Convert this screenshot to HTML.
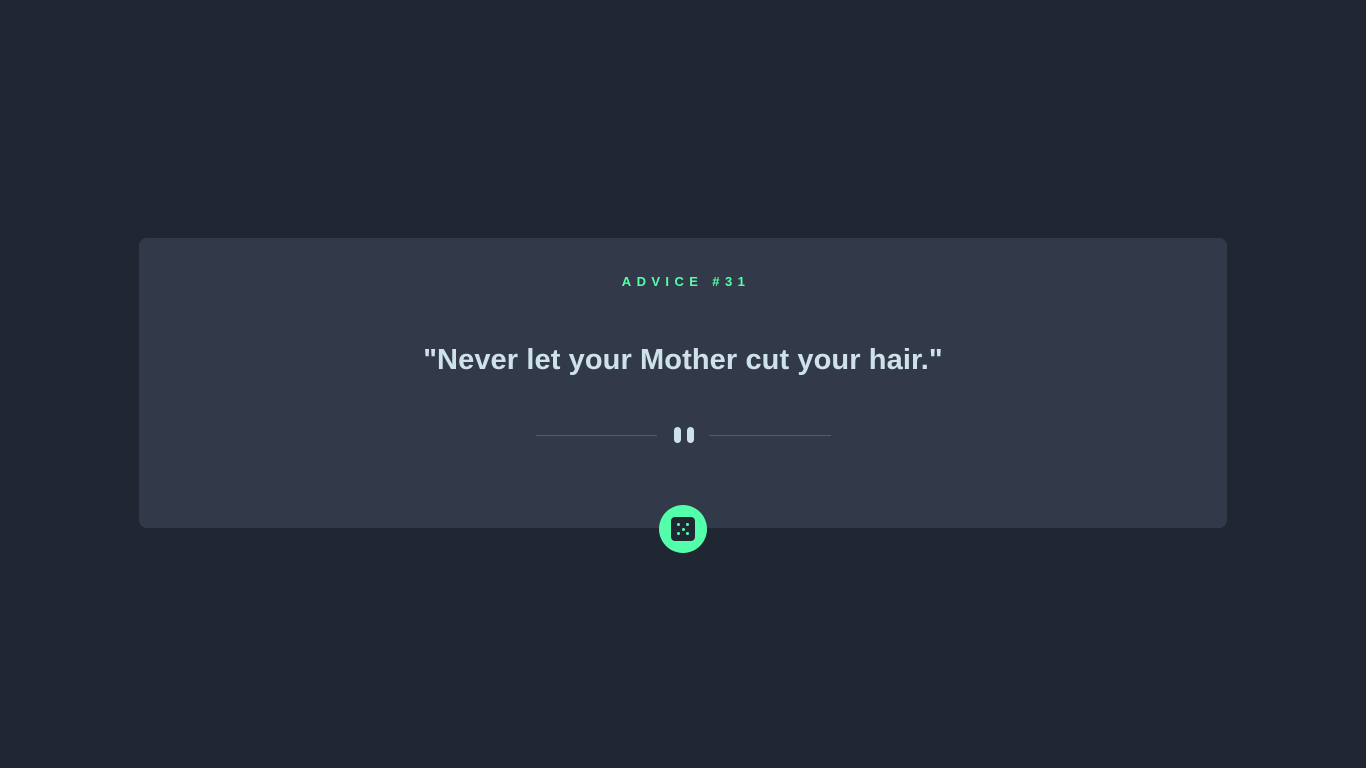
<!DOCTYPE html>
<html><head><meta charset="utf-8"><style>
html,body{margin:0;padding:0;}
body{width:1366px;height:768px;background:#202632;font-family:"Liberation Sans",sans-serif;position:relative;overflow:hidden;}
.card{position:absolute;left:139px;top:238px;width:1088px;height:290px;background:#323a4a;border-radius:8px;}
.t{position:absolute;left:0;right:0;top:274px;text-align:center;color:#53ffaa;font-size:13px;font-weight:bold;letter-spacing:5.4px;padding-left:6px;}
.q{position:absolute;left:0;right:0;top:344px;text-align:center;color:#cee3e9;font-size:29px;font-weight:bold;letter-spacing:0.1px;}
.l{position:absolute;top:435px;height:1px;background:#4f5d74;}
.p{position:absolute;top:427px;width:7px;height:16px;border-radius:4px;background:#cee3e9;}
.b{position:absolute;left:659px;top:505px;width:48px;height:48px;border-radius:50%;background:#53ffaa;}
.d{position:absolute;left:12px;top:12px;width:24px;height:24px;border-radius:4px;background:#202632;}
.d i{position:absolute;width:3px;height:3px;border-radius:50%;background:#53ffaa;}
</style></head><body>
<div class="card"></div>
<div class="t">ADVICE #31</div>
<div class="q">"Never let your Mother cut your hair."</div>
<div class="l" style="left:536px;width:121px"></div>
<div class="l" style="left:709px;width:122px"></div>
<div class="p" style="left:674px"></div>
<div class="p" style="left:687px"></div>
<div class="b"><div class="d"><i style="left:6px;top:6px"></i><i style="left:15px;top:6px"></i><i style="left:10.5px;top:10.5px"></i><i style="left:6px;top:15px"></i><i style="left:15px;top:15px"></i></div></div>
</body></html>
